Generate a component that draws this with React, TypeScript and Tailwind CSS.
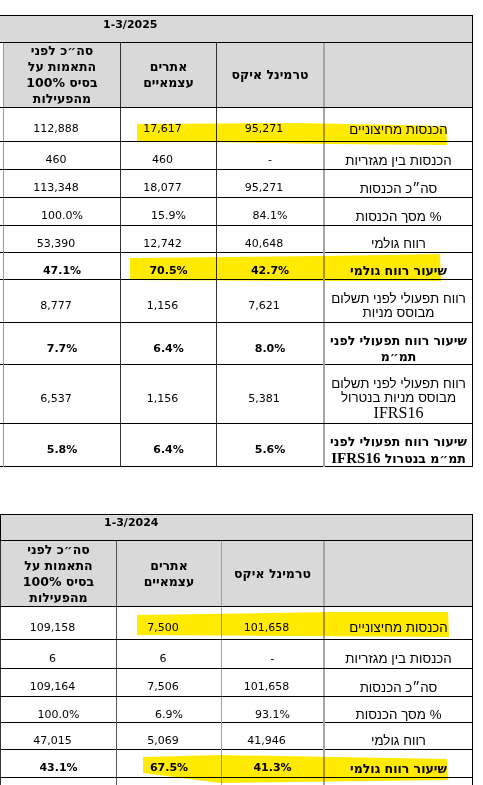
import React from "react";

type Row = {
  h: string;
  label: React.ReactNode;
  vals: string[];
  bold?: boolean;
};

const numFont = "font-['DejaVu_Sans',sans-serif] text-[11px]";
const heFont = "font-['Liberation_Sans','DejaVu_Sans',sans-serif] text-[13.3px] leading-[14px]";
const heBold = "font-['DejaVu_Sans',sans-serif] font-bold text-[12.5px] leading-[16px]";

const ifrs = (bold?: boolean) => (
  <span
    className={
      bold
        ? "font-['Liberation_Serif',serif] font-bold text-[15px]"
        : "font-['Liberation_Serif',serif] text-[16px] leading-[16px]"
    }
  >
    IFRS16
  </span>
);

const rows2025: Row[] = [
  { h: "h-[34px]", label: "הכנסות מחיצוניים", vals: ["95,271", "17,617", "112,888"] },
  { h: "h-[28px]", label: "הכנסות בין מגזריות", vals: ["-", "460", "460"] },
  { h: "h-[28px]", label: "סה״כ הכנסות", vals: ["95,271", "18,077", "113,348"] },
  { h: "h-[28px]", label: "% מסך הכנסות", vals: ["84.1%", "15.9%", "100.0%"] },
  { h: "h-[27px]", label: "רווח גולמי", vals: ["40,648", "12,742", "53,390"] },
  { h: "h-[27px]", label: "שיעור רווח גולמי", vals: ["42.7%", "70.5%", "47.1%"], bold: true },
  {
    h: "h-[43px]",
    label: (
      <>
        רווח תפעולי לפני תשלום
        <br />
        מבוסס מניות
      </>
    ),
    vals: ["7,621", "1,156", "8,777"],
  },
  {
    h: "h-[42px]",
    label: (
      <>
        שיעור רווח תפעולי לפני
        <br />
        תמ״מ
      </>
    ),
    vals: ["8.0%", "6.4%", "7.7%"],
    bold: true,
  },
  {
    h: "h-[59px]",
    label: (
      <>
        רווח תפעולי לפני תשלום
        <br />
        מבוסס מניות בנטרול
        <br />
        {ifrs()}
      </>
    ),
    vals: ["5,381", "1,156", "6,537"],
  },
  {
    h: "h-[43px]",
    label: (
      <>
        שיעור רווח תפעולי לפני
        <br />
        תמ״מ בנטרול {ifrs(true)}
      </>
    ),
    vals: ["5.6%", "6.4%", "5.8%"],
    bold: true,
  },
];

const rows2024: Row[] = [
  { h: "h-[33px]", label: "הכנסות מחיצוניים", vals: ["101,658", "7,500", "109,158"] },
  { h: "h-[29px]", label: "הכנסות בין מגזריות", vals: ["-", "6", "6"] },
  { h: "h-[28px]", label: "סה״כ הכנסות", vals: ["101,658", "7,506", "109,164"] },
  { h: "h-[26px]", label: "% מסך הכנסות", vals: ["93.1%", "6.9%", "100.0%"] },
  { h: "h-[27px]", label: "רווח גולמי", vals: ["41,946", "5,069", "47,015"] },
  { h: "h-[28px]", label: "שיעור רווח גולמי", vals: ["41.3%", "67.5%", "43.1%"], bold: true },
  { h: "h-[43px]", label: "", vals: ["", "", ""] },
];

const cellBase = "flex items-center justify-center text-black";

function Value({ v, bold }: { v: string; bold?: boolean }) {
  const isPct = v.endsWith("%") || v === "-";
  return (
    <span
      className={`${numFont} ${bold ? "font-bold" : ""} ${isPct ? "" : "pr-[12px]"} whitespace-nowrap`}
    >
      {v}
    </span>
  );
}

function SubHeader() {
  return {
    total: (
      <div dir="rtl" className={`${heBold} text-center leading-[15.7px]`}>
        סה״כ לפני
        <br />
        התאמות על
        <br />
        בסיס 100%
        <br />
        מהפעילות
      </div>
    ),
    sites: (
      <div dir="rtl" className={`${heBold} text-center`}>
        אתרים
        <br />
        עצמאיים
      </div>
    ),
    terminal: (
      <div dir="rtl" className={`${heBold} text-center`}>
        טרמינל איקס
      </div>
    ),
  };
}

function Table2025() {
  const sub = SubHeader();
  const grid = "grid grid-cols-[3px_117px_96px_107px_150px]";
  return (
    <div className="w-[473px] border-t border-black">
      <div className="h-[27px] bg-[#d9d9d9] border-b border-r border-black flex items-center pl-[103px] pb-[8px]">
        <span className={`${numFont} text-[11.5px] font-bold`}>1-3/2025</span>
      </div>
      <div className={`${grid} h-[65px] border-b border-black`}>
        <div className="bg-white" />
        <div className={`${cellBase} bg-[#d9d9d9] border-l border-[#9a9a9a]`}>{sub.total}</div>
        <div className={`${cellBase} bg-[#d9d9d9] border-l border-[#333]`}>{sub.sites}</div>
        <div className={`${cellBase} bg-[#d9d9d9] border-l border-[#333]`}>{sub.terminal}</div>
        <div className="bg-[#d9d9d9] border-l-2 border-r border-l-[#a6a6a6] border-r-black" />
      </div>
      {rows2025.map((r, i) => (
        <div key={i} className={`${grid} ${r.h} border-b border-black`}>
          <div />
          <div className={`${cellBase} pt-[10px] border-l border-[#9a9a9a]`}>
            <Value v={r.vals[2]} bold={r.bold} />
          </div>
          <div className={`${cellBase} pt-[10px] border-l border-[#333]`}>
            <Value v={r.vals[1]} bold={r.bold} />
          </div>
          <div className={`${cellBase} pt-[10px] border-l border-[#333]`}>
            <Value v={r.vals[0]} bold={r.bold} />
          </div>
          <div
            className={`${cellBase} pt-[10px] border-l-2 border-r border-l-[#a6a6a6] border-r-black`}
          >
            <div dir="rtl" className={`${r.bold ? heBold + " leading-[15px]" : heFont} text-center whitespace-nowrap`}>
              {r.label}
            </div>
          </div>
        </div>
      ))}
    </div>
  );
}

function Table2024() {
  const sub = SubHeader();
  const grid = "grid grid-cols-[116px_105px_102px_150px]";
  return (
    <div className="w-[473px] border-t border-black">
      <div className="h-[26px] bg-[#d9d9d9] border-b border-r border-l border-black flex items-center pl-[103px] pb-[8px]">
        <span className={`${numFont} text-[11.5px] font-bold`}>1-3/2024</span>
      </div>
      <div className={`${grid} h-[66px] border-b border-black`}>
        <div className={`${cellBase} bg-[#d9d9d9] border-l border-[#333]`}>{sub.total}</div>
        <div className={`${cellBase} bg-[#d9d9d9] border-l border-[#555]`}>{sub.sites}</div>
        <div className={`${cellBase} bg-[#d9d9d9] border-l border-[#a0a0a0]`}>{sub.terminal}</div>
        <div className="bg-[#d9d9d9] border-l-2 border-r border-l-[#a6a6a6] border-r-black" />
      </div>
      {rows2024.map((r, i) => (
        <div key={i} className={`${grid} ${r.h} border-b border-black`}>
          <div className={`${cellBase} pt-[10px] border-l border-[#333]`}>
            <Value v={r.vals[2]} bold={r.bold} />
          </div>
          <div className={`${cellBase} pt-[10px] border-l border-[#555]`}>
            <Value v={r.vals[1]} bold={r.bold} />
          </div>
          <div className={`${cellBase} pt-[10px] border-l border-[#a0a0a0]`}>
            <Value v={r.vals[0]} bold={r.bold} />
          </div>
          <div
            className={`${cellBase} pt-[10px] border-l-2 border-r border-l-[#a6a6a6] border-r-black`}
          >
            <div dir="rtl" className={`${r.bold ? heBold : heFont} text-center whitespace-nowrap`}>
              {r.label}
            </div>
          </div>
        </div>
      ))}
    </div>
  );
}

export default function App() {
  return (
    <div className="relative w-[483px] h-[785px] overflow-hidden bg-white pt-[15px]">
      <Table2025 />
      <div className="mt-[47px]">
        <Table2024 />
      </div>
      {/* marker highlights drawn over the tables */}
      <svg
        className="absolute inset-0 pointer-events-none mix-blend-multiply"
        width="483"
        height="785"
        viewBox="0 0 483 785"
      >
        <g fill="#ffea00">
          <path d="M137 124 L300 123 L446 126 L447 145 L330 144 L137 141 Z" />
          <path d="M130 258 L323 256 L440 254 L441 281 L300 281 L130 280 Z" />
          <path d="M137 615 L330 612 L448 612 L449 637 L137 635 Z" />
          <path d="M143 757 L220 755 L447 759 L448 780 L220 783 L143 773 Z" />
        </g>
      </svg>
    </div>
  );
}
